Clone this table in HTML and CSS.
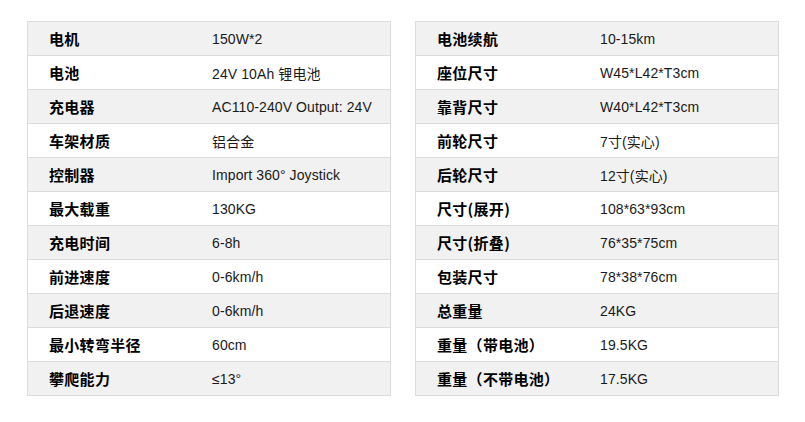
FILE: index.html
```html
<!DOCTYPE html>
<html>
<head>
<meta charset="utf-8">
<link rel="stylesheet" href="styles.css">
</head>
<body>
<div class="wrap">
  <div class="spec">
    <div class="row"><div class="k">电机</div><div class="v">150W*2</div></div>
    <div class="row"><div class="k">电池</div><div class="v">24V 10Ah 锂电池</div></div>
    <div class="row"><div class="k">充电器</div><div class="v">AC110-240V Output: 24V</div></div>
    <div class="row"><div class="k">车架材质</div><div class="v">铝合金</div></div>
    <div class="row"><div class="k">控制器</div><div class="v">Import 360° Joystick</div></div>
    <div class="row"><div class="k">最大载重</div><div class="v">130KG</div></div>
    <div class="row"><div class="k">充电时间</div><div class="v">6-8h</div></div>
    <div class="row"><div class="k">前进速度</div><div class="v">0-6km/h</div></div>
    <div class="row"><div class="k">后退速度</div><div class="v">0-6km/h</div></div>
    <div class="row"><div class="k">最小转弯半径</div><div class="v">60cm</div></div>
    <div class="row"><div class="k">攀爬能力</div><div class="v">≤13°</div></div>
  </div>
  <div class="spec">
    <div class="row"><div class="k">电池续航</div><div class="v">10-15km</div></div>
    <div class="row"><div class="k">座位尺寸</div><div class="v">W45*L42*T3cm</div></div>
    <div class="row"><div class="k">靠背尺寸</div><div class="v">W40*L42*T3cm</div></div>
    <div class="row"><div class="k">前轮尺寸</div><div class="v">7寸(实心)</div></div>
    <div class="row"><div class="k">后轮尺寸</div><div class="v">12寸(实心)</div></div>
    <div class="row"><div class="k">尺寸(展开)</div><div class="v">108*63*93cm</div></div>
    <div class="row"><div class="k">尺寸(折叠)</div><div class="v">76*35*75cm</div></div>
    <div class="row"><div class="k">包装尺寸</div><div class="v">78*38*76cm</div></div>
    <div class="row"><div class="k">总重量</div><div class="v">24KG</div></div>
    <div class="row"><div class="k">重量（带电池）</div><div class="v">19.5KG</div></div>
    <div class="row"><div class="k">重量（不带电池）</div><div class="v">17.5KG</div></div>
  </div>
</div>
</body>
</html>
```
FILE: styles.css
```css
html, body {
  margin: 0;
  padding: 0;
  background: #fff;
}
body {
  font-family: "Liberation Sans", Arial, "Noto Sans CJK SC", sans-serif;
  color: #111;
}
.wrap {
  display: flex;
  gap: 24px;
  padding: 21px 0 0 27px;
}
.spec {
  width: 362px;
  border: 1px solid #dcdcdc;
  border-bottom: none;
}
.row {
  display: flex;
  height: 33px;
  border-bottom: 1px solid #dcdcdc;
  align-items: center;
}
.row:nth-child(odd) {
  background: #f1f1f1;
}
.k {
  width: 142px;
  padding-left: 21px;
  font-family: "Noto Sans CJK SC", sans-serif;
  font-weight: bold;
  font-size: 15px;
  letter-spacing: 0.3px;
  color: #000;
}
.v {
  padding-left: 21px;
  font-size: 14px;
  letter-spacing: 0.1px;
  color: #1a1a1a;
}
```
